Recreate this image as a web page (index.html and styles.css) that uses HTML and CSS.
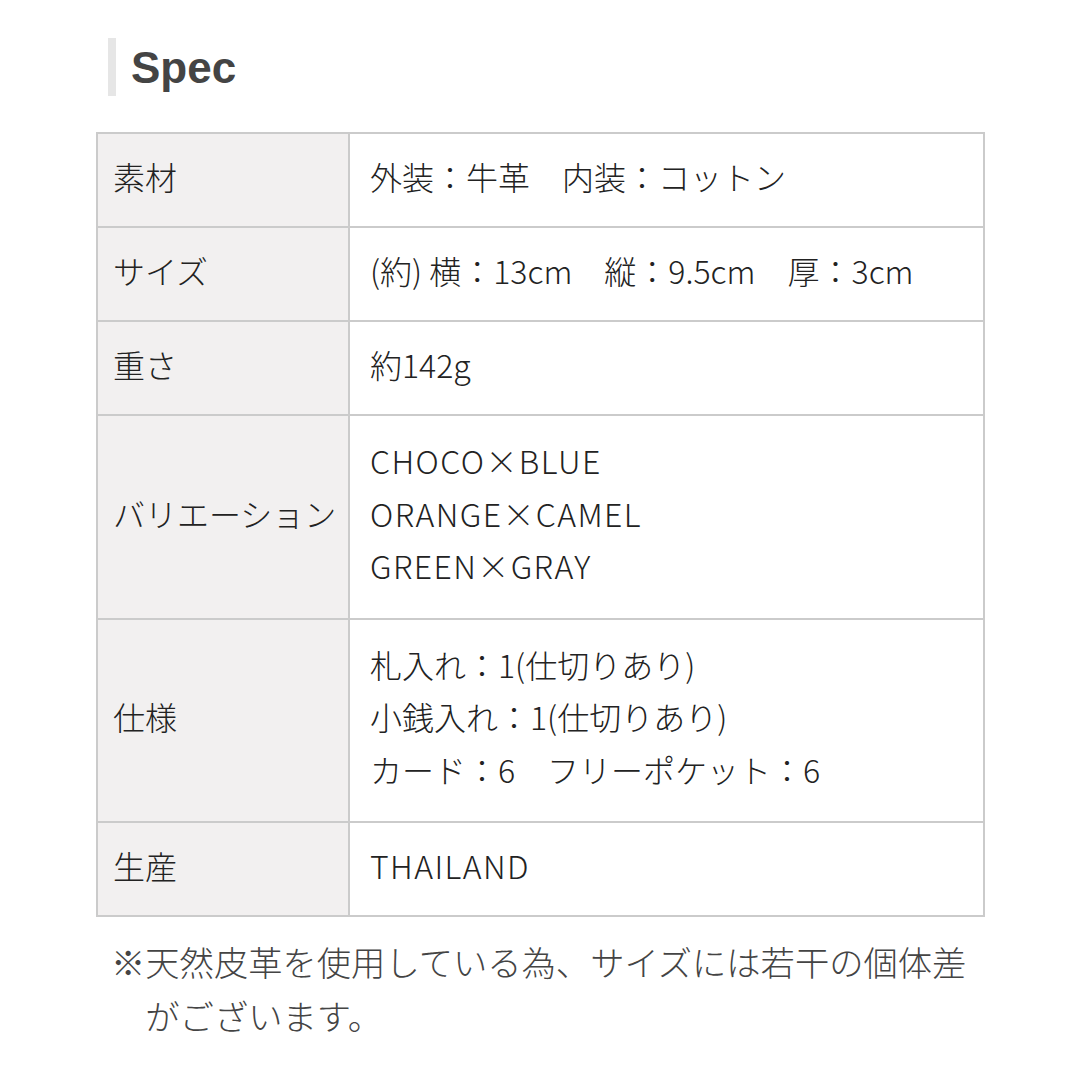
FILE: index.html
```html
<!DOCTYPE html>
<html lang="ja">
<head>
<meta charset="utf-8">
<link rel="stylesheet" href="styles.css">
</head>
<body>
<div class="page">
  <h2 class="title">Spec</h2>
  <table class="spec">
    <tr><th>素材</th><td>外装：牛革　内装：コットン</td></tr>
    <tr><th>サイズ</th><td>(約) 横：13cm　縦：9.5cm　厚：3cm</td></tr>
    <tr><th>重さ</th><td>約142g</td></tr>
    <tr class="multi"><th>バリエーション</th><td class="en">CHOCO×BLUE<br>ORANGE×CAMEL<br>GREEN×GRAY</td></tr>
    <tr class="multi"><th>仕様</th><td>札入れ：1(仕切りあり)<br>小銭入れ：1(仕切りあり)<br>カード：6　フリーポケット：6</td></tr>
    <tr><th>生産</th><td class="en">THAILAND</td></tr>
  </table>
  <p class="note">※天然皮革を使用している為、サイズには若干の個体差がございます。</p>
</div>
</body>
</html>
```
FILE: styles.css
```css
html, body {
  margin: 0;
  padding: 0;
  background: #fff;
}
.page {
  padding: 38px 95px 0 96px;
  font-family: "Noto Sans CJK JP", "Noto Sans", sans-serif;
}
.title {
  margin: 0 0 36px 12px;
  padding-left: 15px;
  border-left: 8px solid #e6e6e6;
  height: 58px;
  line-height: 60px;
  font-family: "Liberation Sans", Arial, sans-serif;
  font-weight: bold;
  font-size: 44px;
  color: #444;
}
.spec {
  width: 889px;
  border-collapse: collapse;
  border: 2px solid #cbcbcb;
}
.spec th, .spec td {
  border: 2px solid #cbcbcb;
  padding: 16px 18px 23.5px;
  font-size: 32px;
  line-height: 52.5px;
  font-weight: 300;
  color: #222;
  text-align: left;
  vertical-align: middle;
}
.spec .multi th, .spec .multi td {
  padding-top: 18px;
  padding-bottom: 26px;
}
.spec th {
  width: 235px;
  background: #f2f0f0;
  padding-left: 15px;
  padding-right: 0;
  white-space: nowrap;
}
.spec td {
  padding-left: 20px;
}
.spec td.en {
  letter-spacing: 1.4px;
}
.note {
  margin: 17px 0 0 15px;
  width: 840px;
  padding-left: 1em;
  text-indent: -1em;
  font-size: 34.3px;
  line-height: 54px;
  font-weight: 300;
  color: #444;
}
```
